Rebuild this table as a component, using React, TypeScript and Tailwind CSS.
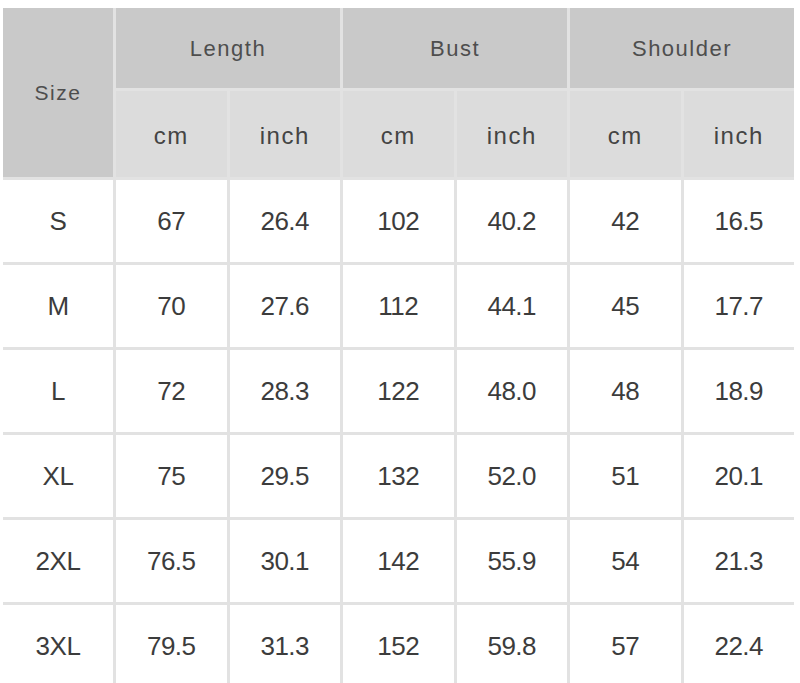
const groups = ['Length', 'Bust', 'Shoulder']

const rows = [
  ['S', '67', '26.4', '102', '40.2', '42', '16.5'],
  ['M', '70', '27.6', '112', '44.1', '45', '17.7'],
  ['L', '72', '28.3', '122', '48.0', '48', '18.9'],
  ['XL', '75', '29.5', '132', '52.0', '51', '20.1'],
  ['2XL', '76.5', '30.1', '142', '55.9', '54', '21.3'],
  ['3XL', '79.5', '31.3', '152', '59.8', '57', '22.4'],
]

export default function App() {
  return (
    <div className="h-[683px] w-[800px] overflow-hidden bg-white pl-[3px] pt-[8px] font-['Liberation_Sans',sans-serif] text-[#3c3c3c]">
      <div className="grid w-[791px] grid-cols-[110px_repeat(6,1fr)] grid-rows-[80px_86px] auto-rows-[82px] gap-[3px] bg-[#e2e2e2]">
        <div className="row-span-2 flex items-center justify-center bg-[#c9c9c9] text-[21px] tracking-[1.5px] text-[#4e4e4e]">
          Size
        </div>
        {groups.map((g) => (
          <div
            key={g}
            className="col-span-2 flex items-center justify-center bg-[#c9c9c9] text-[22px] tracking-[1.5px] text-[#4e4e4e]"
          >
            {g}
          </div>
        ))}
        {groups.map((g) => (
          <>
            <div key={g + 'cm'} className="flex items-center justify-center bg-[#dcdcdc] pt-[3px] text-[24px] tracking-[1.5px] text-[#444]">
              cm
            </div>
            <div key={g + 'in'} className="flex items-center justify-center bg-[#dcdcdc] pt-[3px] text-[24px] tracking-[1.5px] text-[#444]">
              inch
            </div>
          </>
        ))}
        {rows.map((r) =>
          r.map((v, i) => (
            <div
              key={r[0] + i}
              className="flex items-center justify-center bg-white text-[26px] tracking-[-0.5px]"
            >
              {v}
            </div>
          )),
        )}
      </div>
    </div>
  )
}
